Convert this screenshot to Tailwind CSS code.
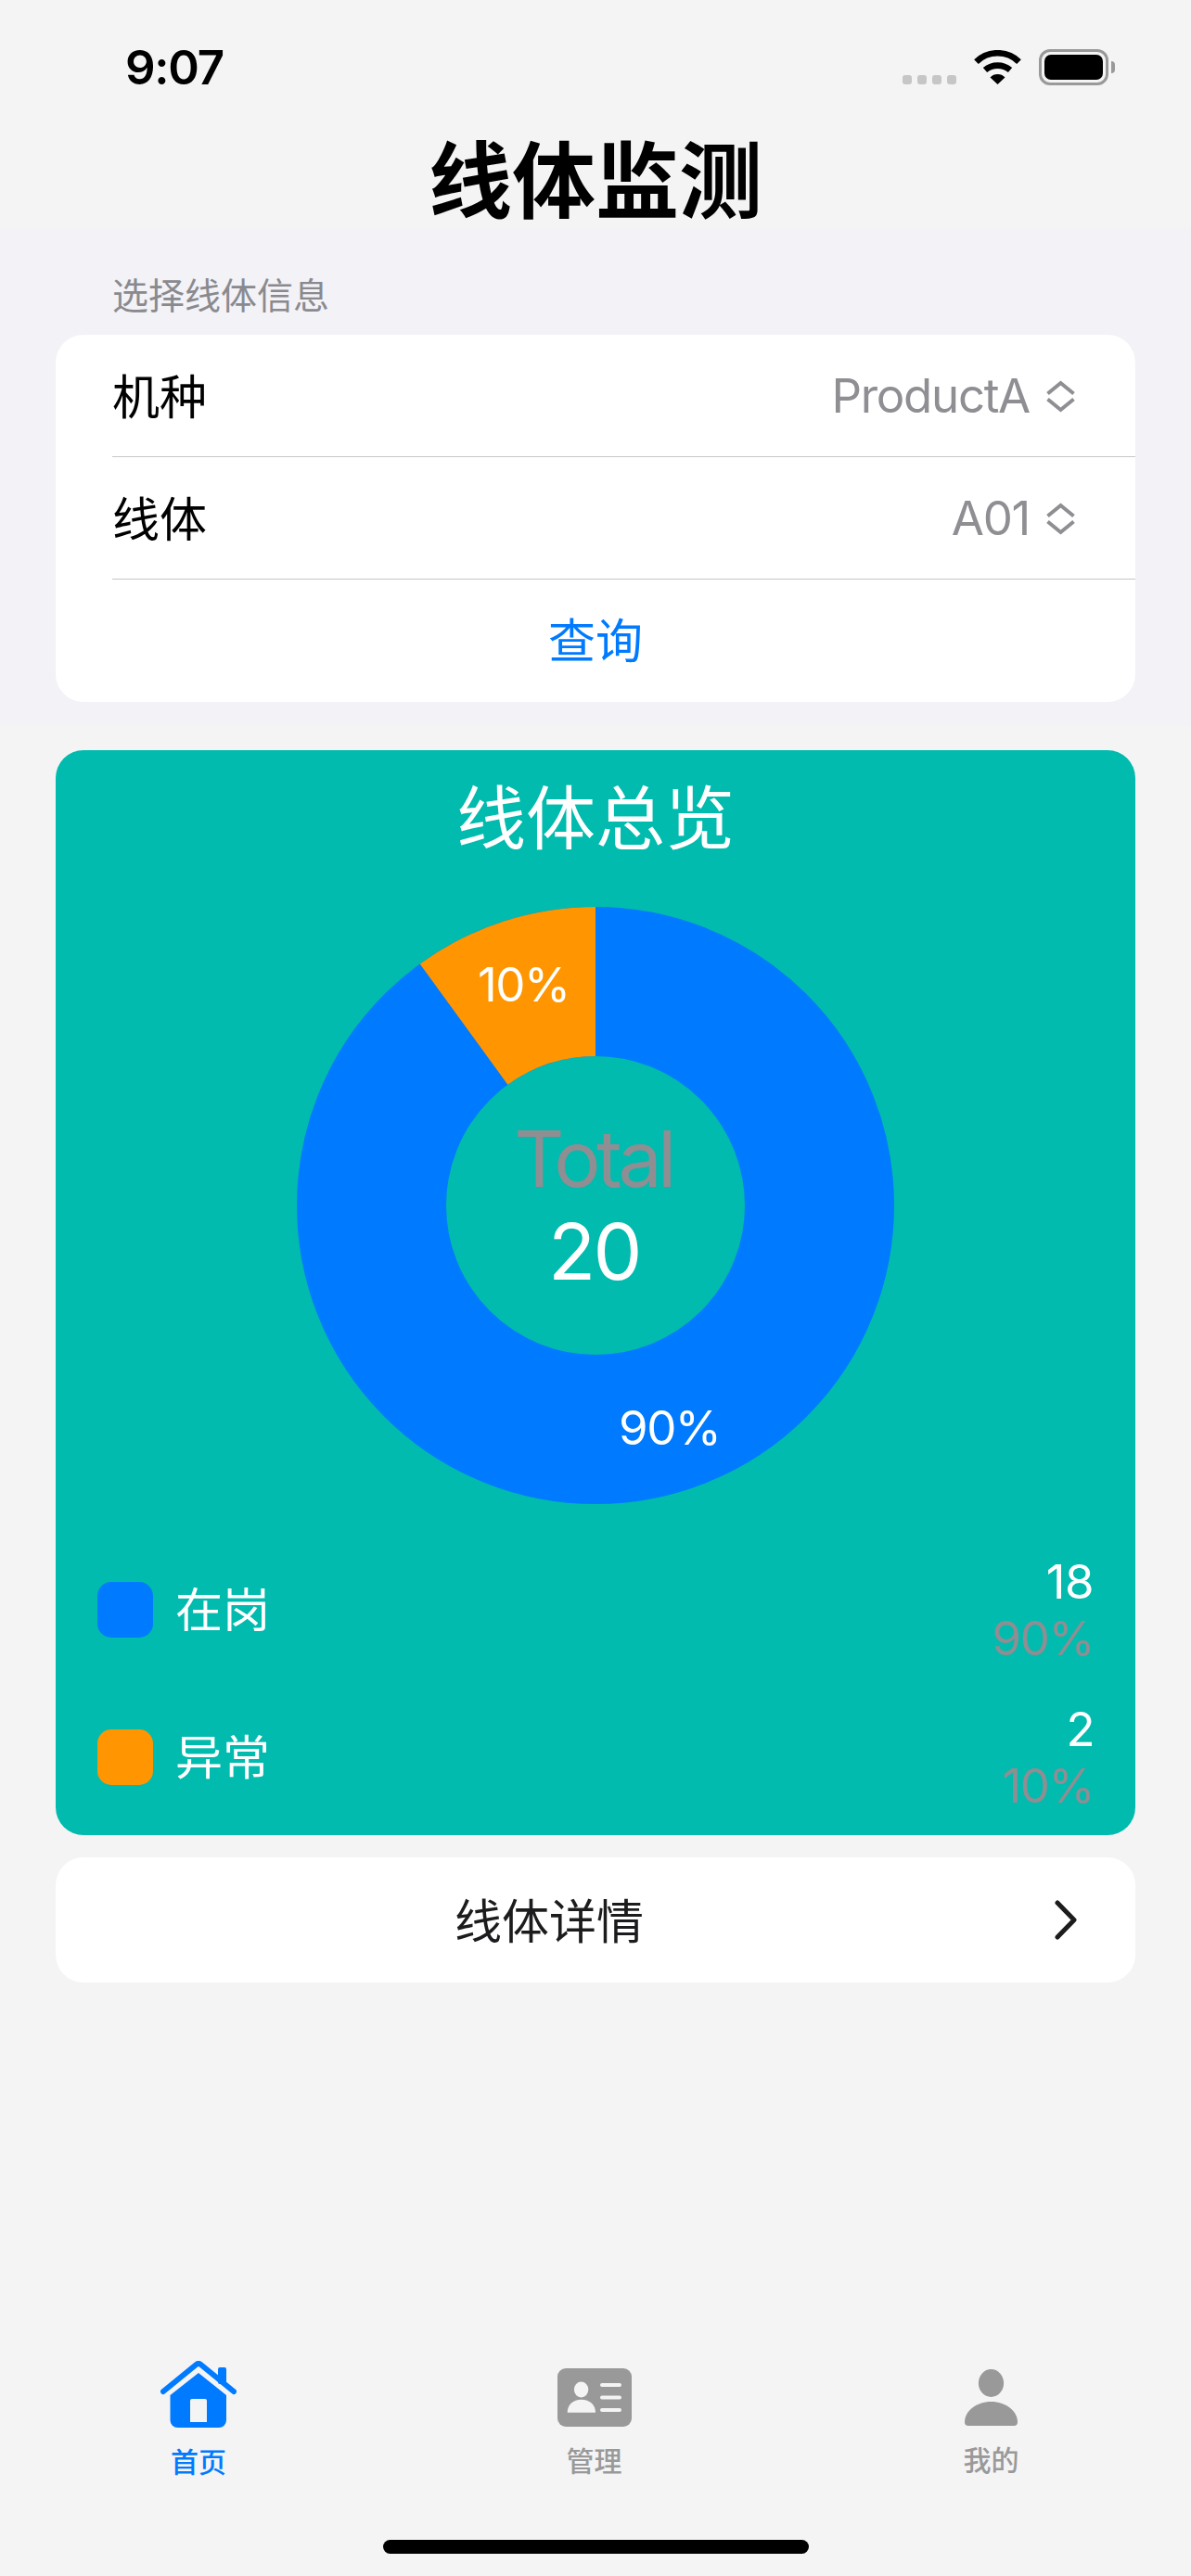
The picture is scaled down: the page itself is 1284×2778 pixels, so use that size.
<!DOCTYPE html>
<html lang="zh-CN">
  <head>
    <meta charset="UTF-8" />
    <meta name="viewport" content="width=device-width, initial-scale=1.0" />
    <title>线体监测</title>
    <script src="https://cdn.jsdelivr.net/npm/@tailwindcss/browser@4"></script>
  </head>
  <body class="bg-[#f4f4f5] font-['Inter','Noto_Sans_CJK_SC',sans-serif]">
    <div class="flex flex-col h-[2778px] w-[1284px] overflow-hidden">
      <!-- Status bar + title -->
      <header class="h-[246px] shrink-0 bg-[#f4f4f5]">
        <div class="flex items-start justify-between h-[146px] pl-[135px] pr-[82px] pt-[53px]">
          <span class="text-[51px] leading-[40px] font-semibold tracking-[-1.3px] text-black">9:07</span>
          <div class="flex items-start">
            <div class="flex gap-[6px] mt-[28px]">
              <span class="w-[10px] h-[10px] rounded-[3px] bg-[#c6c6c6]"></span>
              <span class="w-[10px] h-[10px] rounded-[3px] bg-[#c6c6c6]"></span>
              <span class="w-[10px] h-[10px] rounded-[3px] bg-[#c6c6c6]"></span>
              <span class="w-[10px] h-[10px] rounded-[3px] bg-[#c6c6c6]"></span>
            </div>
            <svg class="ml-[19px] mt-[1px]" width="51" height="37" viewBox="0 0 51 37">
              <path d="M2.5 12.6 A33 33 0 0 1 48.5 12.6" fill="none" stroke="#000" stroke-width="6.7" />
              <path d="M12 21.5 A21 21 0 0 1 39 21.5" fill="none" stroke="#000" stroke-width="6.7" />
              <path d="M25.5 37 L17.5 29.5 A11 11 0 0 1 33.5 29.5 Z" fill="#000" />
            </svg>
            <div class="ml-[19px] flex items-center">
              <div class="w-[75px] h-[39px] rounded-[12px] border-[3px] border-[#999999] p-[3px]">
                <div class="w-full h-full rounded-[7px] bg-black"></div>
              </div>
              <div class="ml-[3px] w-[4px] h-[13px] rounded-r-full bg-[#999999]"></div>
            </div>
          </div>
        </div>
        <h1 class="text-center text-[90px] leading-[100px] font-bold text-black">线体监测</h1>
      </header>

      <!-- Picker form -->
      <section class="h-[537px] shrink-0 bg-[#f2f2f7] px-[60px]">
        <p class="h-[115px] pl-[61px] pt-[49px] text-[39px] leading-[48px] text-[#8a8a8e]">选择线体信息</p>
        <div class="rounded-[30px] bg-white">
          <div class="flex items-center justify-between h-[132px] ml-[61px] pt-[5px] border-b border-[#c6c6c8]">
            <span class="text-[51px] text-black">机种</span>
            <div class="flex items-center gap-[17px] mb-[3px] pr-[64px] text-[51px] tracking-[-1.3px] text-[#8e8e93]">
              <span>ProductA</span>
              <svg width="33" height="35" viewBox="0 0 33 35" fill="none" stroke="#8e8e93" stroke-width="4">
                <path d="M2.5 14.5 L16.5 3 L30.5 14.5" />
                <path d="M2.5 20.5 L16.5 32 L30.5 20.5" />
              </svg>
            </div>
          </div>
          <div class="flex items-center justify-between h-[132px] ml-[61px] pt-[5px] border-b border-[#c6c6c8]">
            <span class="text-[51px] text-black">线体</span>
            <div class="flex items-center gap-[17px] mb-[3px] pr-[64px] text-[51px] tracking-[-1.3px] text-[#8e8e93]">
              <span>A01</span>
              <svg width="33" height="35" viewBox="0 0 33 35" fill="none" stroke="#8e8e93" stroke-width="4">
                <path d="M2.5 14.5 L16.5 3 L30.5 14.5" />
                <path d="M2.5 20.5 L16.5 32 L30.5 20.5" />
              </svg>
            </div>
          </div>
          <div class="flex items-center justify-center h-[132px] pt-[3px] text-[51px] text-[#007aff]">查询</div>
        </div>
      </section>

      <!-- Overview -->
      <main class="flex-1 px-[60px] pt-[26px]">
        <div class="h-[1170px] rounded-[30px] bg-[#00bbae] px-[45px]">
          <h2 class="h-[169px] pt-[29px] text-center text-[75px] leading-[90px] text-white">线体总览</h2>
          <div class="relative mx-auto w-[644px] h-[644px]">
            <svg width="644" height="644" viewBox="0 0 644 644">
              <circle cx="322" cy="322" r="241.5" fill="none" stroke="#007aff" stroke-width="161" />
              <path d="M322 0 A322 322 0 0 0 132.7 61.5 L227.4 191.75 A161 161 0 0 1 322 161 Z" fill="#ff9500" />
            </svg>
            <span class="absolute left-[195px] top-[54px] text-[51px] leading-[60px] tracking-[-1.5px] text-white">10%</span>
            <span class="absolute left-[347px] top-[532px] text-[51px] leading-[60px] tracking-[-1.5px] text-white">90%</span>
            <div class="absolute inset-0 flex flex-col items-center justify-center text-[84px] leading-[100px]">
              <span class="-ml-[5px] tracking-[-4.6px] text-[#8e8e93]">Total</span>
              <span class="-ml-[3px] tracking-[-2.5px] text-white">20</span>
            </div>
          </div>

          <div class="mt-[59px] flex items-center justify-between h-[110px]">
            <div class="flex items-center gap-[24px]">
              <span class="w-[60px] h-[60px] rounded-[15px] bg-[#007aff]"></span>
              <span class="mt-[2px] text-[51px] text-white">在岗</span>
            </div>
            <div class="text-right text-[51px] leading-[61px] tracking-[-1.5px]">
              <div class="tracking-[-0.5px] text-white">18</div>
              <div class="text-[#8e8e93]">90%</div>
            </div>
          </div>
          <div class="mt-[49px] flex items-center justify-between h-[110px]">
            <div class="flex items-center gap-[24px]">
              <span class="w-[60px] h-[60px] rounded-[15px] bg-[#ff9500]"></span>
              <span class="mt-[2px] text-[51px] text-white">异常</span>
            </div>
            <div class="text-right text-[51px] leading-[61px] tracking-[-1.5px]">
              <div class="text-white">2</div>
              <div class="text-[#8e8e93]">10%</div>
            </div>
          </div>
        </div>

        <div class="relative mt-[24px] flex items-center justify-center h-[135px] pt-[5px] pr-[100px] rounded-[30px] bg-white">
          <span class="text-[51px] text-[#1c1c1e]">线体详情</span>
          <svg class="absolute right-[63px] top-[46px]" width="24" height="43" viewBox="0 0 24 43" fill="none" stroke="#1c1c1e" stroke-width="5" stroke-linecap="round" stroke-linejoin="round">
            <path d="M3 3 L21 21.5 L3 40" />
          </svg>
        </div>
      </main>

      <!-- Tab bar -->
      <nav class="grid grid-cols-3 h-[232px] shrink-0 text-[30px] font-medium leading-[36px]">
        <div class="flex flex-col items-center">
          <svg width="82" height="72" viewBox="0 0 82 72">
            <rect x="62" y="7" width="9" height="18" rx="2" fill="#007aff" />
            <path d="M3 33 L38.5 4 Q41 2 43.5 4 L79 33" fill="none" stroke="#007aff" stroke-width="6" stroke-linecap="round" stroke-linejoin="round" />
            <path d="M10.5 37 L41 13 L71 37 V64 A8 8 0 0 1 63 72 H18.5 A8 8 0 0 1 10.5 64 Z" fill="#007aff" />
            <path d="M32 43 A2 2 0 0 1 34 41 H48 A2 2 0 0 1 50 43 V66 H32 Z" fill="#f4f4f5" />
          </svg>
          <span class="mt-[19px] text-[#007aff]">首页</span>
        </div>
        <div class="flex flex-col items-center pt-[8px] pr-[3px]">
          <svg width="80" height="63" viewBox="0 0 80 63">
            <rect width="80" height="63" rx="9" fill="#999999" />
            <ellipse cx="25.6" cy="23" rx="7.7" ry="8.5" fill="#f4f4f5" />
            <path d="M10.7 47.7 C10.7 39 17 33.7 25.8 33.7 S41 39 41 47.7 Z" fill="#f4f4f5" />
            <rect x="46" y="16" width="23" height="4" rx="2" fill="#f4f4f5" />
            <rect x="46" y="29.5" width="23" height="4" rx="2" fill="#f4f4f5" />
            <rect x="46" y="43" width="23" height="4" rx="2" fill="#f4f4f5" />
          </svg>
          <span class="mt-[19px] text-[#999999]">管理</span>
        </div>
        <div class="flex flex-col items-center pt-[9px] pr-[3px]">
          <svg width="57" height="61" viewBox="0 0 57 61" fill="#999999">
            <ellipse cx="28.5" cy="15" rx="13.6" ry="15" />
            <path d="M4 61 H53 A4 4 0 0 0 57 57 C57 45 44 35 28.5 35 S0 45 0 57 A4 4 0 0 0 4 61 Z" />
          </svg>
          <span class="mt-[19px] text-[#999999]">我的</span>
        </div>
      </nav>
    </div>

    <!-- Home indicator -->
    <div class="fixed left-[413px] top-[2739px] w-[459px] h-[15px] rounded-full bg-black"></div>
  </body>
</html>
